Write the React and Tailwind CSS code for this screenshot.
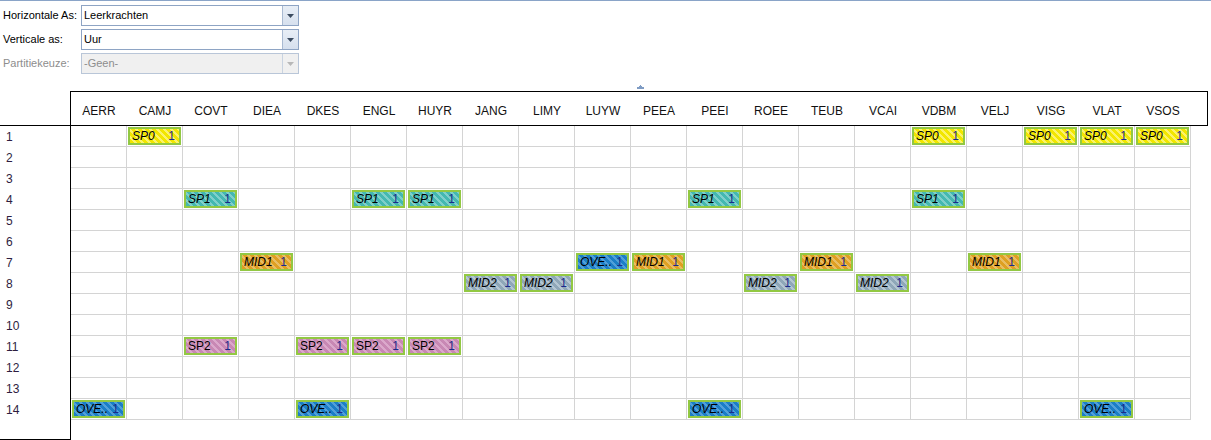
import React from "react";

const COLS = ["AERR","CAMJ","COVT","DIEA","DKES","ENGL","HUYR","JANG","LIMY","LUYW","PEEA","PEEI","ROEE","TEUB","VCAI","VDBM","VELJ","VISG","VLAT","VSOS"];

const STYLE = {
  SP0: "bg-[repeating-linear-gradient(45deg,#f2e600_0px,#f2e600_3px,#fbf36c_3px,#fbf36c_5px)] italic",
  SP1: "bg-[repeating-linear-gradient(45deg,#44b8b1_0px,#44b8b1_3px,#7fcfca_3px,#7fcfca_5px)] italic",
  MID1: "bg-[repeating-linear-gradient(45deg,#dfa022_0px,#dfa022_3px,#e9bd63_3px,#e9bd63_5px)] italic",
  MID2: "bg-[repeating-linear-gradient(45deg,#8fa7b8_0px,#8fa7b8_3px,#b4c6d2_3px,#b4c6d2_5px)] italic",
  "OVE..": "bg-[repeating-linear-gradient(45deg,#1b7ec7_0px,#1b7ec7_3px,#519fd9_3px,#519fd9_5px)] italic",
  SP2: "bg-[repeating-linear-gradient(45deg,#c888b4_0px,#c888b4_3px,#dba8cb_3px,#dba8cb_5px)]",
};

const DATA = {
  0: { 1: "SP0", 15: "SP0", 17: "SP0", 18: "SP0", 19: "SP0" },
  3: { 2: "SP1", 5: "SP1", 6: "SP1", 11: "SP1", 15: "SP1" },
  6: { 3: "MID1", 9: "OVE..", 10: "MID1", 13: "MID1", 16: "MID1" },
  7: { 7: "MID2", 8: "MID2", 12: "MID2", 14: "MID2" },
  10: { 2: "SP2", 4: "SP2", 5: "SP2", 6: "SP2" },
  13: { 0: "OVE..", 4: "OVE..", 11: "OVE..", 18: "OVE.." },
};

function Block({ name }) {
  return (
    <div className={`m-[1px] h-[18px] flex items-center justify-between pl-[2px] pr-[4px] border-2 border-[#92c843] text-[12px] leading-none text-black ${STYLE[name]}`}>
      <span>{name}</span>
      <span className="not-italic text-[#1c2a8a]">1</span>
    </div>
  );
}

function Select({ value, disabled }) {
  return (
    <div className={`w-[218px] h-[21px] flex border ${disabled ? "border-[#b9c6d8] bg-[#f0f0f0]" : "border-[#8ea4c4] bg-white"}`}>
      <div className={`flex-1 flex items-center pl-[2px] text-[11px] ${disabled ? "text-[#8d8d8d]" : "text-black"}`}>{value}</div>
      <div className={`w-[16px] flex items-center justify-center border-l ${disabled ? "border-[#c9d3e0] bg-[#f0f0f0]" : "border-[#a9bad2] bg-[linear-gradient(#e8eef6,#d6e0ee)]"}`}>
        <svg width="7" height="4" viewBox="0 0 7 4">
          <path d="M0 0H7L3.5 4Z" fill={disabled ? "#b8b8b8" : "#3b4b60"} />
        </svg>
      </div>
    </div>
  );
}

function FormRow({ label, value, disabled }) {
  return (
    <div className="flex items-center h-[21px]">
      <div className={`w-[81px] pl-[3px] text-[11px] ${disabled ? "text-[#8d8d8d]" : "text-black"}`}>{label}</div>
      <Select value={value} disabled={disabled} />
    </div>
  );
}

export default function App() {
  const rows = Array.from({ length: 14 }, (_, i) => i);
  return (
    <div className="w-[1211px] h-[440px] overflow-hidden bg-white border-t border-[#8aa4c8] font-['Liberation_Sans',Arial,sans-serif]">
      <div className="flex flex-col gap-[3px] pt-[4px]">
        <FormRow label="Horizontale As:" value="Leerkrachten" />
        <FormRow label="Verticale as:" value="Uur" />
        <FormRow label="Partitiekeuze:" value="-Geen-" disabled />
      </div>
      <div className="h-[17px] flex items-start pt-[11px] pl-[637px]">
        <svg width="7" height="4" viewBox="0 0 7 4">
          <path d="M3 0H4V1H5V2H7V4H0V2H2V1H3Z" fill="#7f9cc4" />
        </svg>
      </div>
      <div className="flex h-[35px] w-[1208px] border-b border-black">
        <div className="w-[70px]" />
        <div className="w-[1138px] h-[34px] border-t border-l border-r border-black flex">
          {COLS.map((c) => (
            <div key={c} className="w-[56px] h-full flex items-end justify-center pb-[5px] text-[12px] text-[#111]">
              {c}
            </div>
          ))}
        </div>
      </div>
      <div className="flex items-start">
        <div className="w-[71px] h-[314px] border-r border-b border-black flex flex-col">
          {rows.map((r) => (
            <div key={r} className="h-[21px] flex items-center pl-[6px] text-[12px] text-[#2e1d40]">
              {r + 1}
            </div>
          ))}
        </div>
        <div className="grid grid-cols-[repeat(20,56px)] auto-rows-[21px] self-start">
          {rows.map((r) =>
            COLS.map((c, ci) => {
              const item = DATA[r] && DATA[r][ci];
              return (
                <div key={`${r}-${ci}`} className="h-[21px] border-r border-b border-[#d4d4d4]">
                  {item ? <Block name={item} /> : null}
                </div>
              );
            })
          )}
        </div>
      </div>
    </div>
  );
}
